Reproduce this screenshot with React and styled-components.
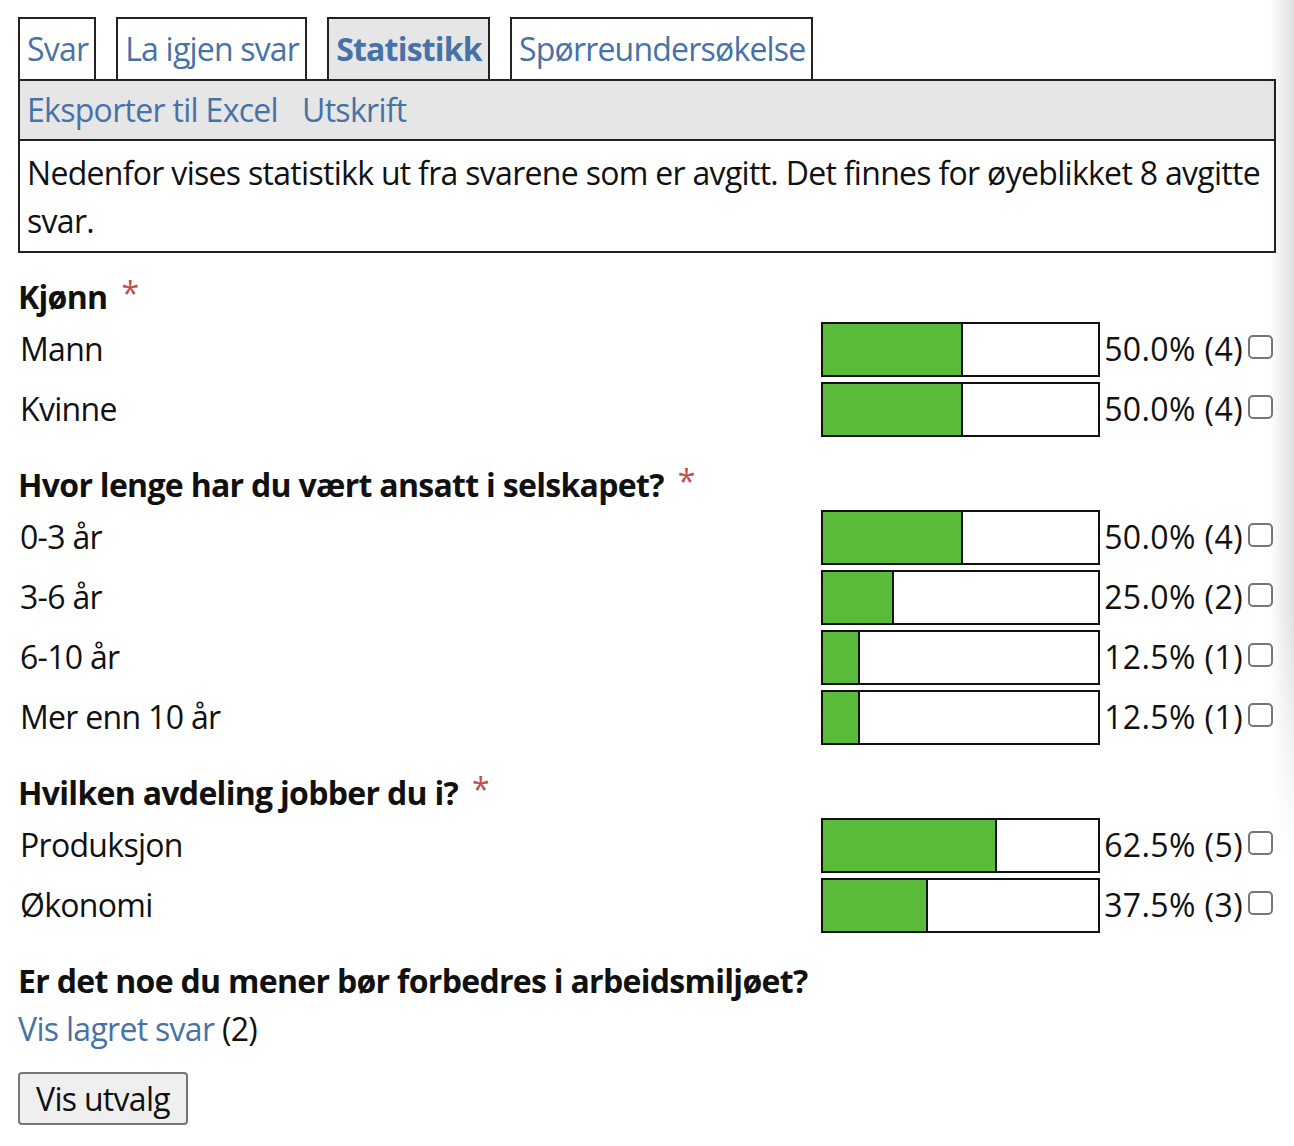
import styled, { createGlobalStyle } from "styled-components";

const GlobalStyle = createGlobalStyle`
    body {
        margin: 0;
        font-family: "Open Sans", "Noto Sans", sans-serif;
        font-size: 32px;
        line-height: 48px;
        letter-spacing: -0.7px;
        color: #111;
        background: #fff;
    }
`

const Page = styled.div`
    padding: 17px 18px 20px 18px;
`

const EdgeShade = styled.div`
    position: fixed;
    top: 0;
    right: 0;
    width: 24px;
    height: 860px;
    pointer-events: none;
    background: linear-gradient(to right, rgba(0, 0, 0, 0), rgba(0, 0, 0, 0.13));
    -webkit-mask-image: linear-gradient(to bottom, #000 70%, transparent 100%);
    mask-image: linear-gradient(to bottom, #000 70%, transparent 100%);
`

const TabRow = styled.div`
    display: flex;
    gap: 20px;
    align-items: flex-end;
`

const Tab = styled.a`
    display: block;
    border: 2px solid #222;
    border-bottom: none;
    padding: 6px 6px 6px 7px;
    letter-spacing: -0.8px;
    color: #4672a8;
    text-decoration: none;
    background: ${p => (p.$active ? "#e6e6e6" : "#fff")};
    font-weight: ${p => (p.$active ? "bold" : "normal")};
`

const Toolbar = styled.div`
    display: flex;
    gap: 24px;
    border: 2px solid #222;
    background: #e6e6e6;
    padding: 5px 7px 5px 7px;
`

const Link = styled.a`
    color: #4672a8;
    text-decoration: none;
`

const Intro = styled.div`
    border: 2px solid #222;
    border-top: none;
    padding: 8px 7px 6px 7px;
`

const Question = styled.section`
    margin-top: 20px;
`

const Heading = styled.div`
    font-weight: bold;
`

const Required = styled.span`
    color: #c0504d;
    font-weight: normal;
    margin-left: 14px;
    position: relative;
    top: -4px;
`

const Grid = styled.div`
    display: grid;
    grid-template-columns: 1fr 279px max-content 33px;
    grid-auto-rows: 60px;
`

const Label = styled.div`
    padding-left: 2px;
    display: flex;
    align-items: center;
    height: 56px;
`

const Bar = styled.div`
    margin-top: 1px;
    height: 55px;
    box-sizing: border-box;
    border: 2px solid #111;
    background: #fff;
    display: flex;
`

const Fill = styled.div`
    background: #5abb3a;
    border-right: 2px solid #111;
    height: 100%;
`

const Percent = styled.div`
    padding-left: 4px;
    display: flex;
    align-items: center;
    height: 56px;
    white-space: nowrap;
    letter-spacing: 0.4px;
`

const CheckCell = styled.div`
    display: flex;
    align-items: center;
    justify-content: flex-end;
    height: 52px;
    padding-right: 3px;
`

const Check = styled.input`
    appearance: none;
    margin: 0;
    width: 25px;
    height: 24px;
    border: 2px solid #767676;
    border-radius: 5px;
    background: #fff;
`

const SavedLine = styled.div``

const Button = styled.button`
    margin-top: 19px;
    font: inherit;
    letter-spacing: inherit;
    line-height: 49px;
    padding: 0 16px;
    background: #efefef;
    border: 2px solid #767676;
    border-radius: 4px;
    color: #111;
`

const questions = [
    {
        title: "Kjønn",
        rows: [
            ["Mann", 50.0, 4],
            ["Kvinne", 50.0, 4],
        ],
    },
    {
        title: "Hvor lenge har du vært ansatt i selskapet?",
        rows: [
            ["0-3 år", 50.0, 4],
            ["3-6 år", 25.0, 2],
            ["6-10 år", 12.5, 1],
            ["Mer enn 10 år", 12.5, 1],
        ],
    },
    {
        title: "Hvilken avdeling jobber du i?",
        rows: [
            ["Produksjon", 62.5, 5],
            ["Økonomi", 37.5, 3],
        ],
    },
]

function StatRow({ label, pct, count }) {
    return (
        <>
            <Label>{label}</Label>
            <Bar>
                <Fill style={{ width: `${pct}%` }} />
            </Bar>
            <Percent>{pct.toFixed(1)}% ({count})</Percent>
            <CheckCell>
                <Check type="checkbox" />
            </CheckCell>
        </>
    )
}

export default function App() {
    return (
        <Page>
            <GlobalStyle />
            <EdgeShade />
            <TabRow>
                <Tab href="#">Svar</Tab>
                <Tab href="#">La igjen svar</Tab>
                <Tab href="#" $active>Statistikk</Tab>
                <Tab href="#">Spørreundersøkelse</Tab>
            </TabRow>
            <Toolbar>
                <Link href="#">Eksporter til Excel</Link>
                <Link href="#">Utskrift</Link>
            </Toolbar>
            <Intro>
                Nedenfor vises statistikk ut fra svarene som er avgitt. Det finnes for øyeblikket 8 avgitte svar.
            </Intro>
            {questions.map(q => (
                <Question key={q.title}>
                    <Heading>
                        {q.title}
                        <Required>*</Required>
                    </Heading>
                    <Grid>
                        {q.rows.map(([label, pct, count]) => (
                            <StatRow key={label} label={label} pct={pct} count={count} />
                        ))}
                    </Grid>
                </Question>
            ))}
            <Question>
                <Heading>Er det noe du mener bør forbedres i arbeidsmiljøet?</Heading>
                <SavedLine>
                    <Link href="#">Vis lagret svar</Link> (2)
                </SavedLine>
                <Button>Vis utvalg</Button>
            </Question>
        </Page>
    )
}
